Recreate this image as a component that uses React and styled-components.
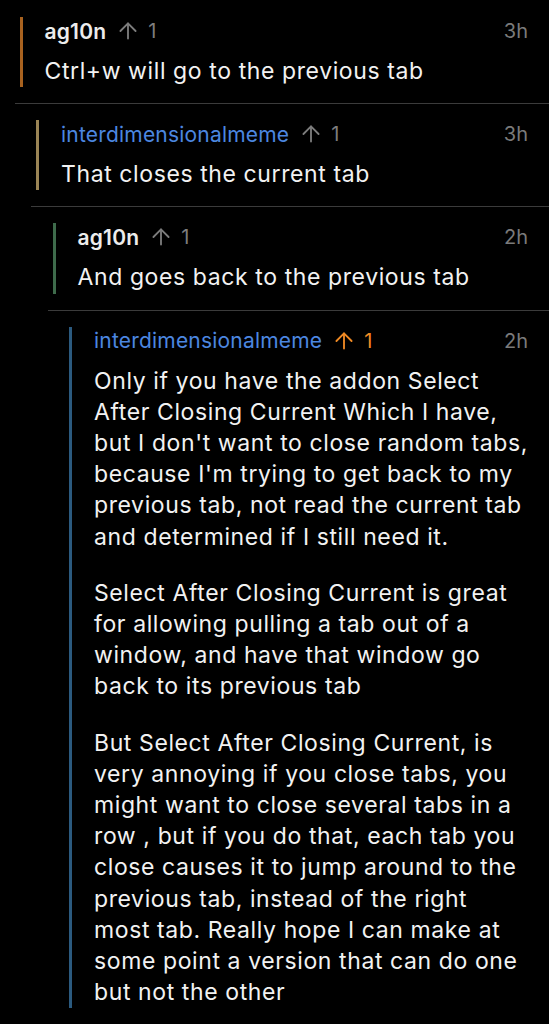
import React from 'react';
import styled, {createGlobalStyle} from 'styled-components';
import {ArrowUp} from 'lucide-react';

const GlobalStyle = createGlobalStyle`
  html, body {
    margin: 0;
    padding: 0;
    background: #000;
  }
  body {
    font-family: Inter, "Noto Sans", sans-serif;
    -webkit-font-smoothing: antialiased;
  }
`;

const BAR_COLORS = ['#a8621f', '#9b8555', '#3e6b4b', '#2b5a7f'];

const Thread = styled.div`
  width: 549px;
  min-height: 1024px;
  background: #000;
  padding-top: 1px;
  box-sizing: border-box;
`;

const CommentBlock = styled.div`
  margin-left: ${props => 14.5 + props.depth * 16.5}px;
  padding: 16px 21px 16px 5px;
  border-bottom: ${props => props.last ? 'none' : '1px solid #3b3b3b'};
`;

const CommentInner = styled.div`
  border-left: 3px solid ${props => BAR_COLORS[props.depth % BAR_COLORS.length]};
  padding-left: 22px;
`;

const Header = styled.div`
  display: flex;
  align-items: center;
  height: 28px;
`;

const Author = styled.span`
  font-size: 21px;
  letter-spacing: 0.2px;
  font-weight: ${props => props.highlight ? 400 : 600};
  color: ${props => props.highlight ? '#4c87e0' : '#ececec'};
`;

const Score = styled.span`
  display: flex;
  align-items: center;
  gap: 7px;
  margin-left: 9px;
  font-size: 20px;
  color: ${props => props.voted ? '#f08a24' : '#7d7d7d'};
`;

const Age = styled.span`
  margin-left: auto;
  font-size: 20px;
  color: #7a7a7a;
`;

const Body = styled.div`
  margin-top: 11px;
  font-size: 23px;
  letter-spacing: 0.6px;
  line-height: 31.2px;
  color: #f2f2f2;

  p {
    margin: 0;
  }

  p + p {
    margin-top: 25px;
  }
`;

const comments = [
  {
    depth: 0,
    author: 'ag10n',
    score: 1,
    age: '3h',
    body: ['Ctrl+w will go to the previous tab']
  },
  {
    depth: 1,
    author: 'interdimensionalmeme',
    op: true,
    score: 1,
    age: '3h',
    body: ['That closes the current tab']
  },
  {
    depth: 2,
    author: 'ag10n',
    score: 1,
    age: '2h',
    body: ['And goes back to the previous tab']
  },
  {
    depth: 3,
    author: 'interdimensionalmeme',
    op: true,
    score: 1,
    voted: true,
    age: '2h',
    last: true,
    body: [
      "Only if you have the addon Select After Closing Current Which I have, but I don't want to close random tabs, because I'm trying to get back to my previous tab, not read the current tab and determined if I still need it.",
      'Select After Closing Current is great for allowing pulling a tab out of a window, and have that window go back to its previous tab',
      'But Select After Closing Current, is very annoying if you close tabs, you might want to close several tabs in a row , but if you do that, each tab you close causes it to jump around to the previous tab, instead of the right most tab. Really hope I can make at some point a version that can do one but not the other'
    ]
  }
];

const Comment = ({comment}) => (
  <CommentBlock depth={comment.depth} last={comment.last}>
    <CommentInner depth={comment.depth}>
      <Header>
        <Author highlight={comment.op}>{comment.author}</Author>
        <Score voted={comment.voted}>
          <ArrowUp size={26} strokeWidth={1.7} />
          {comment.score}
        </Score>
        <Age>{comment.age}</Age>
      </Header>
      <Body>
        {comment.body.map((text, i) => <p key={i}>{text}</p>)}
      </Body>
    </CommentInner>
  </CommentBlock>
);

export default function App() {
  return (
    <Thread>
      <GlobalStyle />
      {comments.map((c, i) => <Comment key={i} comment={c} />)}
    </Thread>
  );
}
